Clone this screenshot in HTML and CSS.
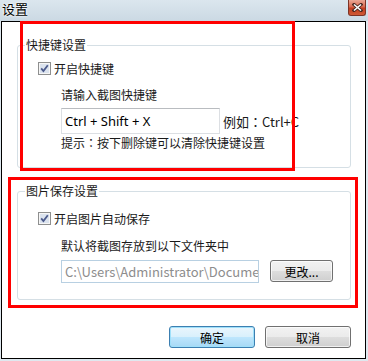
FILE: index.html
```html
<!DOCTYPE html>
<html>
<head>
    <title>设置</title>
    <link rel="stylesheet" href="styles.css">
</head>
<body>
    <div class="window">
        <div class="titlebar">
            <span class="title">设置</span>
            <span class="close-btn">
                <svg width="11" height="9" viewBox="0 0 11 9">
                    <path d="M2 1.5 L9 7.5 M9 1.5 L2 7.5" stroke="#4a2a22" stroke-width="3.2" stroke-linecap="square"/>
                    <path d="M2 1.5 L9 7.5 M9 1.5 L2 7.5" stroke="#fff" stroke-width="1.6"/>
                </svg>
            </span>
        </div>

        <div class="client">
            <fieldset class="group group-hotkey">
                <legend>快捷键设置</legend>
                <div class="check-row">
                    <span class="checkbox">
                        <svg width="13" height="13" viewBox="0 0 13 13">
                            <rect x="0.5" y="0.5" width="12" height="12" fill="#f6f6f6" stroke="#8e8f8f"/>
                            <rect x="2" y="2" width="9" height="9" fill="#dbe3ee"/>
                            <path d="M3.2 6.4 L5.4 9 L9.8 3.2" fill="none" stroke="#4b5a8c" stroke-width="1.8"/>
                        </svg>
                    </span>
                    开启快捷键
                </div>
                <div class="sub">
                    <p class="line">请输入截图快捷键</p>
                    <div class="input-row">
                        <div class="textbox hotkey-box">Ctrl + Shift + X</div>
                        <span class="example">例如<span class="colon">：</span>Ctrl+C</span>
                    </div>
                    <p class="line hint">提示<span class="colon">：</span>按下删除键可以清除快捷键设置</p>
                </div>
            </fieldset>

            <fieldset class="group group-save">
                <legend>图片保存设置</legend>
                <div class="check-row">
                    <span class="checkbox">
                        <svg width="13" height="13" viewBox="0 0 13 13">
                            <rect x="0.5" y="0.5" width="12" height="12" fill="#f6f6f6" stroke="#8e8f8f"/>
                            <rect x="2" y="2" width="9" height="9" fill="#dbe3ee"/>
                            <path d="M3.2 6.4 L5.4 9 L9.8 3.2" fill="none" stroke="#4b5a8c" stroke-width="1.8"/>
                        </svg>
                    </span>
                    开启图片自动保存
                </div>
                <div class="sub">
                    <p class="line">默认将截图存放到以下文件夹中</p>
                    <div class="input-row">
                        <div class="textbox path-box">C:\Users\Administrator\Documents</div>
                        <button class="btn change-btn">更改...</button>
                    </div>
                </div>
            </fieldset>

            <div class="dialog-buttons">
                <button class="btn btn-default">确定</button>
                <button class="btn">取消</button>
            </div>
        </div>

        <!-- red annotation frames drawn over the dialog -->
        <div class="mark mark-hotkey"></div>
        <div class="mark mark-save"></div>
    </div>
</body>
</html>
```

FILE: styles.css
```css
* {
    margin: 0;
    padding: 0;
    box-sizing: border-box;
}

body {
    font-family: "Noto Sans CJK SC", sans-serif;
    font-size: 12px;
    color: #1a1a1a;
    background: #dfe8ef;
}

.window {
    position: relative;
    width: 368px;
    height: 361px;
    background: #dfe8ef;
    overflow: hidden;
}

.titlebar {
    height: 21px;
    display: flex;
    justify-content: space-between;
    align-items: flex-start;
    background: linear-gradient(#dbe6ee, #cbd9e3);
}

.title {
    padding: 1px 0 0 2px;
    font-size: 13px;
    line-height: 16px;
    color: #000;
    text-shadow: 0 0 3px #fff, 0 0 2px #fff;
}

.close-btn {
    width: 18px;
    height: 16px;
    margin-right: 2px;
    display: flex;
    align-items: center;
    justify-content: center;
    border: 1px solid #7d3426;
    border-top: none;
    border-radius: 0 0 3px 3px;
    background: linear-gradient(#eaa896, #d8694f 45%, #c23d1f 55%, #cf5a36);
}

.client {
    margin-left: 1px;
    width: 365px;
    height: 338px;
    border: 1px solid #000;
    background: #fff;
    padding-top: 16px;
}

.group {
    margin-left: 15px;
    width: 334px;
    border: 1px solid #d5dfe5;
    border-radius: 3px;
    padding: 0 0 0 20px;
}

.group legend {
    margin-left: -13px;
    padding: 0 1px;
    line-height: 14px;
}

.group-hotkey {
    height: 130px;
}

.group-save {
    height: 116px;
    margin-top: 16px;
}

.check-row {
    display: flex;
    align-items: center;
    gap: 3px;
    height: 16px;
}

.group-hotkey .check-row {
    margin-top: 8px;
}

.group-save .check-row {
    margin-top: 12px;
}

.checkbox {
    display: flex;
    width: 13px;
    height: 13px;
}

.sub {
    padding-left: 23px;
}

.line {
    line-height: 16px;
    white-space: nowrap;
}

.colon {
    font-family: "Noto Sans CJK JP", sans-serif;
}

.group-hotkey .line {
    margin-top: 11px;
}

.group-hotkey .hint {
    margin-top: 1px;
}

.group-save .line {
    margin-top: 12px;
}

.input-row {
    display: flex;
    align-items: flex-start;
    white-space: nowrap;
}

.group-hotkey .input-row {
    margin-top: 5px;
    align-items: center;
}

.group-save .input-row {
    margin-top: 6px;
}

.textbox {
    overflow: hidden;
    white-space: nowrap;
    background: #fff;
    padding-left: 3px;
}

.hotkey-box {
    width: 159px;
    height: 26px;
    line-height: 24px;
    font-family: "Noto Sans", sans-serif;
    font-size: 13px;
    color: #000;
    border: 1px solid #dcdfe3;
    border-top-color: #b9bcc0;
}

.example {
    margin-left: 3px;
    font-size: 13px;
}

.path-box {
    width: 198px;
    height: 23px;
    line-height: 21px;
    font-size: 13px;
    color: #8d8d8d;
    border: 1px solid #b8d0e2;
}

.btn {
    font-family: "Noto Sans CJK SC", sans-serif;
    font-size: 12px;
    color: #000;
    height: 22px;
    border: 1px solid #707070;
    border-radius: 3px;
    background: linear-gradient(#f2f2f2, #ebebeb 49%, #dddddd 51%, #cfcfcf);
    box-shadow: inset 0 0 0 1px rgba(255, 255, 255, 0.7);
}

.change-btn {
    width: 63px;
    margin-left: 11px;
}

.dialog-buttons {
    display: flex;
    justify-content: flex-end;
    gap: 10px;
    margin-top: 26px;
    padding-right: 14px;
}

.dialog-buttons .btn {
    width: 86px;
}

.btn-default {
    border-color: #3c7fb1;
    background: linear-gradient(#eaf6fd, #d9f0fc 49%, #bee6fd 51%, #a7d9f5);
    box-shadow: inset 0 0 0 1px #9fe0fa;
}

.mark {
    position: absolute;
    border: 3px solid #ff0000;
}

.mark-hotkey {
    left: 20px;
    top: 21px;
    width: 275px;
    height: 150px;
}

.mark-save {
    left: 8px;
    top: 177px;
    width: 350px;
    height: 131px;
}
```
